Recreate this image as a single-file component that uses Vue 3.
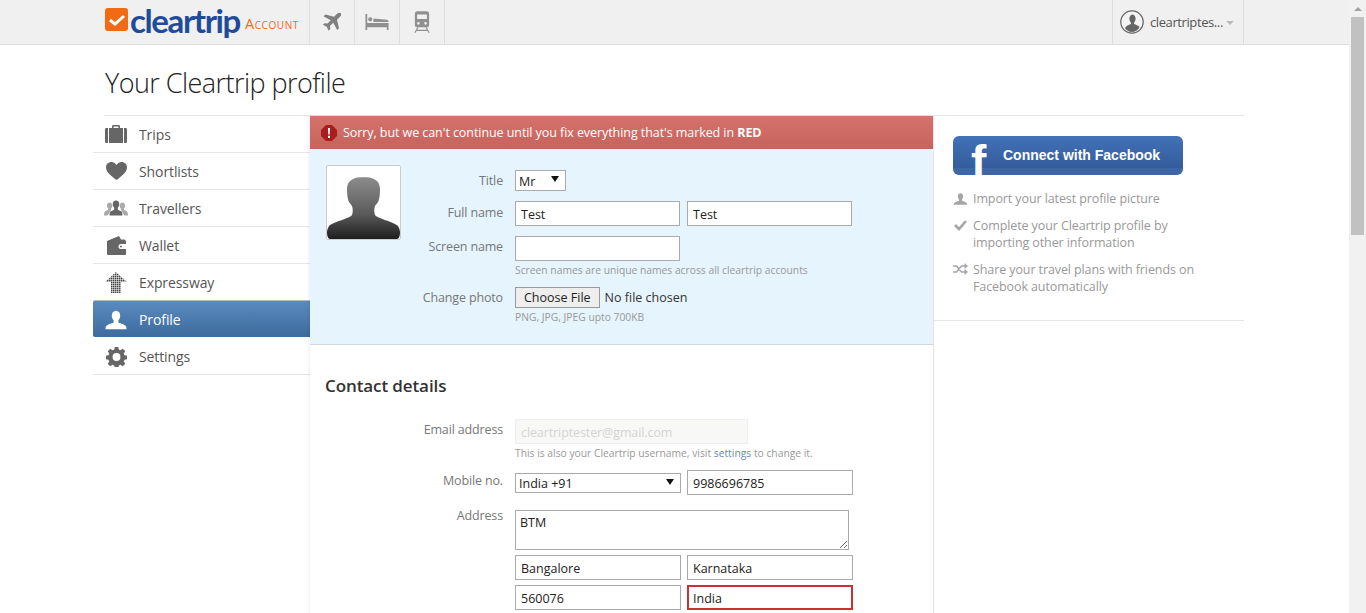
<script setup>
const menu = [
  { name: 'Trips', icon: 'trips' },
  { name: 'Shortlists', icon: 'heart' },
  { name: 'Travellers', icon: 'people' },
  { name: 'Wallet', icon: 'wallet' },
  { name: 'Expressway', icon: 'express' },
  { name: 'Profile', icon: 'person', active: true },
  { name: 'Settings', icon: 'gear' }
];
const person = 'M12 2c3 0 4.600 2.400 4.600 5.200 0 2.200-.9 4.200-2 5.300v2.300c2 1.200 7.400 2 8.400 4.400.3.7.5 1.800.5 2.800H.5c0-1 .2-2.100.5-2.800 1-2.400 6.400-3.200 8.400-4.400v-2.300c-1.100-1.100-2-3.100-2-5.300C7.400 4.400 9 2 12 2z';
const gear = 'M10 1h4l.6 3 2 .9 2.600-1.700 2.800 2.800-1.700 2.600.9 2 3 .6v4l-3 .6-.9 2 1.700 2.600-2.800 2.800-2.600-1.700-2 .9-.6 3h-4l-.6-3-2-.9-2.600 1.700-2.800-2.800 1.700-2.600-.9-2-3-.6v-4l3-.6.9-2-1.700-2.600 2.800-2.800 2.600 1.700 2-.9zM12 8a4.500 4.500 0 1 0 0 9 4.500 4.500 0 0 0 0-9z';
</script>

<template>
  <div class="screen">
    <div class="page">
      <header class="topbar">
        <div class="brand">
          <span class="brand-mark">
            <svg width="18" height="14" viewBox="0 0 18 14"><path d="M2 7l5 4 9-8" fill="none" stroke="#fff" stroke-width="3"/></svg>
          </span>
          <span class="brand-name">cleartrip</span>
          <span class="brand-sub">Account</span>
        </div>
        <nav class="modes">
          <a class="mode">
            <svg width="20" height="20" viewBox="0 0 24 24"><path fill="#808080" d="M22.500 1.500c-1.200-1.200-3.200-.6-4.400.6l-3.600 3.600L4 3 1.800 5.200l8.700 4.700-3.900 4-3.600-.5L1 15.400l4.600 2.400 2.400 4.700 2-2-.5-3.600 4-3.900 4.700 8.700 2.200-2.200L18 9.400l3.600-3.600c1.200-1.200 2-3.100.9-4.300z"/></svg>
          </a>
          <a class="mode">
            <svg width="26" height="16" viewBox="0 0 26 18"><path fill="#909090" d="M0 0h2v10h24v8h-2v-3H2v3H0zM3 6a2.400 2.400 0 1 1 4.800 0A2.400 2.400 0 0 1 3 6zm6-1l15 1.500c1 .1 2 .7 2 2.500H9z"/></svg>
          </a>
          <a class="mode">
            <svg width="16" height="22" viewBox="0 0 18 24"><path fill="#909090" fill-rule="evenodd" d="M4 0h10c2 0 3 1 3 3v12c0 2-1 3-3 3H4c-2 0-3-1-3-3V3c0-2 1-3 3-3zm-.500 3.500v5h11v-5zM5 12a1.500 1.500 0 1 0 0 3 1.500 1.500 0 0 0 0-3zm8 0a1.500 1.500 0 1 0 0 3 1.500 1.500 0 0 0 0-3z"/><path d="M4.500 18L1 24M13.500 18L17 24M3 21.500h12" stroke="#909090" stroke-width="1.300" fill="none"/></svg>
          </a>
        </nav>
        <div class="account">
          <svg width="24" height="24" viewBox="0 0 24 24">
            <circle cx="12" cy="12" r="11.200" fill="#f4f4f4" stroke="#666" stroke-width="1.200"/>
            <path fill="#666" d="M12 4.500c2.300 0 3.600 1.800 3.600 4 0 1.600-.6 3-1.500 3.900v1.700c1.500.9 4.300 1.400 5.400 3l-.6 1.100A10 10 0 0 1 12 22a10 10 0 0 1-7-3.800l.6-1.100c1.100-1.600 3.800-2.100 5.300-3v-1.700c-.9-.9-1.500-2.300-1.500-3.900 0-2.200 1.300-4 3.600-4z"/>
          </svg>
          <span class="account-name">cleartriptes...</span>
          <span class="caret"></span>
        </div>
      </header>

      <div class="wrap">
        <h1 class="page-title">Your Cleartrip profile</h1>
        <div class="columns">
          <ul class="side">
            <li v-for="item in menu" :key="item.name" :class="['side-item', { active: item.active }]">
              <span class="side-icon">
                <svg v-if="item.icon === 'trips'" width="22" height="18" viewBox="0 0 22 18"><path fill="#666" fill-rule="evenodd" d="M7 3V1.500C7 .5 7.500 0 8.500 0h5c1 0 1.500.5 1.500 1.500V3h5.500c1 0 1.500.6 1.500 1.500v12c0 .9-.5 1.500-1.500 1.500h-19C.5 18 0 17.400 0 16.500v-12C0 3.600.5 3 1.500 3zm1.500-1.500V3h5V1.500zM3 3v15h1V3zm15 0v15h1V3z"/></svg>
                <svg v-else-if="item.icon === 'heart'" width="21" height="18" viewBox="0 0 21 18"><path fill="#666" d="M10.500 18C6 14.500 0 10.500 0 5.500 0 2.300 2.300 0 5.300 0c2.200 0 4 1.100 5.200 3C11.700 1.100 13.500 0 15.700 0 18.700 0 21 2.300 21 5.500c0 5-6 9-10.500 12.500z"/></svg>
                <svg v-else-if="item.icon === 'people'" width="26" height="16" viewBox="0 0 26 16"><path fill="#aaa" d="M6 2c2 0 3 1.500 3 3.300 0 1.300-.5 2.500-1.300 3.200v1.300L4 16H0c0-3 .6-4 1.500-4.500l3-1.500V8.500C3.700 7.800 3.200 6.600 3.200 5.300 3.200 3.500 4 2 6 2zM20 2c2 0 2.800 1.500 2.800 3.300 0 1.300-.5 2.500-1.300 3.200V10l3 1.500c.9.500 1.500 1.500 1.500 4.500h-4l-3.700-6.200V8.500C17.500 7.800 17 6.600 17 5.300 17 3.500 18 2 20 2z"/><path fill="#666" d="M13 0c2.400 0 3.500 1.800 3.500 4 0 1.600-.6 3-1.500 3.800v2l3.500 1.700c1 .5 1.500 1.500 1.500 4.500H6c0-3 .5-4 1.500-4.500L11 9.800v-2C10.100 7 9.500 5.600 9.500 4c0-2.200 1.100-4 3.500-4z"/></svg>
                <svg v-else-if="item.icon === 'wallet'" width="19" height="19" viewBox="0 0 19 19"><path fill="#666" fill-rule="evenodd" d="M0 5l12-5 2 3.500h3.500L19 5v3h-5a2.500 2.500 0 0 0 0 5h5v4.500c0 1-.5 1.500-1.500 1.500h-16C.5 19 0 18.500 0 17.500zM14 9.500a1 1 0 1 0 0 2 1 1 0 0 0 0-2z"/></svg>
                <svg v-else-if="item.icon === 'express'" width="22" height="21" viewBox="0 0 22 21"><defs><pattern id="dots" width="2" height="2" patternUnits="userSpaceOnUse"><rect width="1.500" height="1.500" fill="#444"/></pattern></defs><path fill="url(#dots)" d="M11 0l11 10h-6v11H6V10H0z"/></svg>
                <svg v-else-if="item.icon === 'person'" width="22" height="22" viewBox="0 0 24 24"><path fill="#fff" :d="person"/></svg>
                <svg v-else width="21" height="21" viewBox="0 0 24 24"><path fill="#666" fill-rule="evenodd" :d="gear"/></svg>
              </span>
              <span>{{ item.name }}</span>
            </li>
          </ul>

          <main class="main">
            <div class="alert">
              <svg width="16" height="16" viewBox="0 0 16 16"><path fill="#a81e1e" d="M5 0h6l5 5v6l-5 5H5l-5-5V5z"/><path fill="#fff" d="M7 3h2l-.3 6.500H7.300zM7 10.800h2V13H7z"/></svg>
              <span>Sorry, but we can't continue until you fix everything that's marked in <b>RED</b></span>
            </div>

            <section class="personal">
              <div class="photo">
                <svg width="73" height="73" viewBox="0 0 73 73">
                  <defs><linearGradient id="bust" x1="0" y1="0" x2="0" y2="1"><stop offset="0" stop-color="#8c8c8c"/><stop offset=".6" stop-color="#5a5a5a"/><stop offset="1" stop-color="#1e1e1e"/></linearGradient></defs>
                  <path fill="url(#bust)" d="M36 11c10 0 17 3 17 12 0 5-.5 9-1.500 12-.5 2-2.500 3-3.500 5-1 3-1 6 0 9 1.500 3 19 7 23 11 1 2 2 4 2 6 0 4-1 7-3 7H3c-2 0-3-3-3-7 0-2 1-4 2-6 4-4 21.500-8 23-11 1-3 1-6 0-9-1-2-3-3-3.500-5-1-3-1.500-7-1.500-12 0-9 7-12 17-12z"/>
                </svg>
              </div>
              <div class="personal-fields">
                <div class="row row-title">
                  <label>Title</label>
                  <select class="pick pick-title"><option>Mr</option></select>
                </div>
                <div class="row row-name">
                  <label>Full name</label>
                  <div class="pair">
                    <input class="field field-low" value="Test">
                    <input class="field field-low" value="Test">
                  </div>
                </div>
                <div class="row row-screen">
                  <label>Screen name</label>
                  <div>
                    <input class="field">
                    <p class="hint hint-screen">Screen names are unique names across all cleartrip accounts</p>
                  </div>
                </div>
                <div class="row row-photo">
                  <label>Change photo</label>
                  <div>
                    <input class="file" type="file">
                    <p class="hint hint-file">PNG, JPG, JPEG upto 700KB</p>
                  </div>
                </div>
              </div>
            </section>

            <section class="contact">
              <h2>Contact details</h2>
              <div class="row row-email">
                <label>Email address</label>
                <div>
                  <input class="field field-email field-low" value="cleartriptester@gmail.com" disabled>
                  <p class="hint hint-email">This is also your Cleartrip username, visit <a>settings</a> to change it.</p>
                </div>
              </div>
              <div class="row row-mobile">
                <label>Mobile no.</label>
                <div class="pair pair-contact">
                  <select class="pick pick-mobile"><option>India +91</option></select>
                  <input class="field field-wide field-low" value="9986696785">
                </div>
              </div>
              <div class="row row-address">
                <label>Address</label>
                <div class="address">
                  <textarea class="area">BTM</textarea>
                  <div class="pair pair-contact">
                    <input class="field field-wide field-low" value="Bangalore">
                    <input class="field field-wide field-low" value="Karnataka">
                  </div>
                  <div class="pair pair-contact">
                    <input class="field field-wide field-low" value="560076">
                    <input class="field field-wide field-low field-error" value="India">
                  </div>
                </div>
              </div>
            </section>
          </main>

          <aside class="social">
            <div class="social-top">
              <button class="fb-btn">
                <span class="fb-f">f</span>
                <span>Connect with Facebook</span>
              </button>
              <ul class="perks">
                <li>
                  <svg width="15" height="14" viewBox="0 0 24 24"><path fill="#a5a5a5" :d="person"/></svg>
                  <span>Import your latest profile picture</span>
                </li>
                <li>
                  <svg width="15" height="12" viewBox="0 0 14 12"><path d="M1.500 6l4 4 7-8" fill="none" stroke="#a5a5a5" stroke-width="2.600"/></svg>
                  <span>Complete your Cleartrip profile by importing other information</span>
                </li>
                <li>
                  <svg width="15" height="12" viewBox="0 0 15 12"><path d="M0 3h3.500l5 6H12M0 9h3.500l5-6H12" fill="none" stroke="#a5a5a5" stroke-width="1.500"/><path fill="#a5a5a5" d="M11.500 0L15 3l-3.500 3zM11.500 6L15 9l-3.500 3z"/></svg>
                  <span>Share your travel plans with friends on Facebook automatically</span>
                </li>
              </ul>
            </div>
          </aside>
        </div>
      </div>
    </div>

    <div class="scrollbar">
      <span class="scroll-up"></span>
      <span class="scroll-thumb"></span>
    </div>
  </div>
</template>

<style>
html, body { margin: 0; height: 100%; overflow: hidden; background: #fff; }
</style>

<style scoped>
.screen {
  display: flex;
  height: 613px;
  overflow: hidden;
  font-family: "Open Sans", "Noto Sans", sans-serif;
  font-size: 13px;
  color: #333;
}
.page { flex: 1; min-width: 0; overflow: hidden; }

.topbar {
  display: flex;
  height: 44px;
  padding-left: 105px;
  padding-right: 105px;
  background: #f0f0f0;
  border-bottom: 1px solid #ddd;
}
.brand { display: flex; align-items: flex-start; width: 204px; flex: none; }
.brand-mark {
  display: flex;
  align-items: center;
  justify-content: center;
  width: 23px;
  height: 23px;
  margin-top: 8px;
  background: #f26a12;
  border-radius: 3px;
}
.brand-name {
  margin-left: 2px;
  font-family: Lato, sans-serif;
  font-size: 33px;
  font-weight: 700;
  line-height: 40px;
  letter-spacing: -1.400px;
  color: #1f4b9b;
}
.brand-sub {
  margin-left: 5px;
  margin-top: 15px;
  font-size: 14.500px;
  font-variant: small-caps;
  line-height: 18px;
  letter-spacing: .6px;
  color: #f26a12;
}
.modes { display: flex; border-left: 1px solid #ddd; }
.mode {
  display: flex;
  align-items: center;
  justify-content: center;
  width: 44px;
  border-right: 1px solid #ddd;
}
.account {
  display: flex;
  align-items: center;
  width: 132px;
  margin-left: auto;
  padding-left: 7px;
  box-sizing: border-box;
  border-left: 1px solid #ddd;
  border-right: 1px solid #ddd;
}
.account-name { margin-left: 6px; font-size: 13px; letter-spacing: -.4px; color: #555; }
.caret {
  margin: 2px 0 0 3px;
  border-left: 4px solid transparent;
  border-right: 4px solid transparent;
  border-top: 4px solid #bbb;
}

.wrap { width: 1151px; margin-left: 93px; }
.page-title {
  margin: 0 0 0 12px;
  height: 70px;
  font-size: 27px;
  font-weight: 300;
  line-height: 76px;
  letter-spacing: -.55px;
  color: #222;
}
.columns { display: flex; align-items: flex-start; border-top: 1px solid #e6e6e6; margin-left: 11px; height: 520px; }
.side { width: 217px; margin: 0 0 0 -11px; padding: 0; list-style: none; flex: none; }
.side-item {
  display: flex;
  align-items: center;
  height: 36px;
  padding-left: 11px;
  border-bottom: 1px solid #e6e6e6;
  font-size: 14px;
  letter-spacing: -.1px;
  color: #555;
}
.side-icon { display: flex; justify-content: center; width: 24px; margin-right: 11px; }
.side-item.active {
  height: 33px;
  padding-top: 2px;
  background: linear-gradient(#5a8abf, #3e6c9f);
  border-top: 1px solid #bbb;
  margin-top: -1px;
  border-bottom: 1px solid #3e6c9f;
  margin-bottom: 1px;
  border-radius: 2px 0 0 2px;
  color: #fff;
}

.main {
  flex: none;
  width: 623px;
  height: 520px;
  border-right: 1px solid #e4e4e4;
  box-shadow: -1px 0 3px rgba(0,0,0,.08);
}
.alert {
  display: flex;
  align-items: center;
  gap: 6px;
  height: 33px;
  padding-left: 11px;
  background: linear-gradient(#d5726b, #c7635d);
  font-size: 12.500px;
  letter-spacing: -.07px;
  color: #fff;
}
.personal {
  display: flex;
  height: 196px;
  box-sizing: border-box;
  padding: 16px 0 0 16px;
  background: #e6f4fd;
  border-bottom: 1px solid #cfd8de;
}
.photo {
  width: 73px;
  height: 73px;
  background: #fff;
  border: 1px solid #ccc;
  border-radius: 2px;
  display: flex;
  flex: none;
}
.personal-fields { padding-top: 5px; }
.row { display: flex; align-items: flex-start; }
.row label {
  flex: none;
  width: 102px;
  margin-right: 12px;
  text-align: right;
  font-size: 12.500px;
  line-height: 18px;
  letter-spacing: -.15px;
  color: #777;
}
.row-title { height: 31px; }
.row-title label { padding-top: 2px; }
.pair { display: flex; gap: 7px; }
.pair-contact { gap: 6px; }
.row-name { height: 35px; }
.row-name label { padding-top: 3px; }
.row-screen { height: 51px; }
.row-screen label { padding-top: 2px; }
.row-photo label { padding-top: 2px; }

.field {
  display: block;
  width: 165px;
  height: 25px;
  box-sizing: border-box;
  padding: 0 5px;
  background: #fff;
  border: 1px solid #aaa;
  border-radius: 0;
  outline: none;
  font-family: inherit;
  font-size: 12.500px;
  color: #222;
}
.field-low { padding-top: 2px; }
.field-wide { width: 166px; }
.field-error { border: 2px solid #c83232; padding: 2px 4px 0; }
.field-email {
  width: 233px;
  background: #f8f8f6;
  border-color: #eee;
  letter-spacing: -.1px;
  color: #d4d4d4;
}
.pick {
  display: block;
  height: 21px;
  box-sizing: border-box;
  padding: 1px 0 0 3px;
  appearance: none;
  background: #fff url("data:image/svg+xml,%3Csvg xmlns='http://www.w3.org/2000/svg' width='8' height='6'%3E%3Cpath d='M0 0h8L4 6z' fill='%23111'/%3E%3C/svg%3E") no-repeat right 6px top 5px;
  border: 1px solid #aaa;
  border-radius: 0;
  font-family: inherit;
  font-size: 12.500px;
  color: #222;
}
.pick-title { width: 51px; }
.pick-mobile { width: 166px; height: 20px; margin-top: 3px; padding-top: 1px; }
.hint { margin: 0; font-size: 10.300px; line-height: 14px; color: #999; }
.hint-screen { margin-top: 2px; }
.hint-file { margin-top: 2px; }
.hint-email { margin-top: 2px; }
.hint a { color: #6a86c4; }
.file { display: block; height: 21px; font-family: inherit; font-size: 12.500px; color: #333; }
.file::file-selector-button {
  height: 21px;
  padding: 0 8px;
  margin-right: 5px;
  background: #eee;
  border: 1px solid #999;
  border-radius: 0;
  font-family: inherit;
  font-size: 12.500px;
  color: #222;
}

.contact { padding: 0 0 0 15px; }
.contact h2 {
  margin: 0;
  height: 74px;
  font-size: 17px;
  font-weight: 600;
  line-height: 82px;
  letter-spacing: -.1px;
  color: #333;
}
.contact .row label { width: 178px; }
.row-email { height: 51px; }
.row-email label { padding-top: 2px; }
.row-mobile { height: 40px; }
.row-mobile label { padding-top: 2px; }
.row-address label { margin-top: -3px; }
.area {
  display: block;
  width: 334px;
  height: 40px;
  box-sizing: border-box;
  padding: 3px 4px;
  border: 1px solid #aaa;
  border-radius: 0;
  outline: none;
  font-family: inherit;
  font-size: 12.500px;
  color: #222;
}
.address { display: grid; gap: 5px; }

.social { flex: 1; }
.social-top { height: 205px; box-sizing: border-box; padding: 20px 0 0 19px; border-bottom: 1px solid #e6e6e6; }
.fb-btn {
  position: relative;
  display: flex;
  align-items: center;
  width: 230px;
  height: 39px;
  overflow: hidden;
  padding: 0 0 2px 50px;
  background: linear-gradient(#4272b8, #345c9c 82%, #3e66a6 82%);
  border: none;
  border-radius: 6px;
  font-family: "Liberation Sans", sans-serif;
  font-size: 14px;
  font-weight: 700;
  color: #fff;
}
.fb-f {
  position: absolute;
  left: 18px;
  top: 3px;
  font-family: "Liberation Sans", sans-serif;
  font-size: 46px;
  line-height: 46px;
  font-weight: 700;
}
.perks { margin: 15px 0 0; padding: 0; list-style: none; }
.perks li {
  display: flex;
  align-items: flex-start;
  gap: 5px;
  margin-bottom: 10px;
  font-size: 12.500px;
  line-height: 17px;
  letter-spacing: -.1px;
  color: #999;
}
.perks svg { flex: none; margin-top: 2px; }
.perks span { width: 225px; }

.scrollbar { position: relative; flex: none; width: 17px; background: #f1f1f1; }
.scroll-up {
  display: block;
  position: absolute;
  left: 5px;
  top: 7px;
  border-left: 4px solid transparent;
  border-right: 4px solid transparent;
  border-bottom: 4px solid #a3a3a3;
}
.scroll-thumb {
  display: block;
  position: absolute;
  left: 2px;
  top: 17px;
  width: 13px;
  height: 218px;
  background: #c1c1c1;
}
</style>
